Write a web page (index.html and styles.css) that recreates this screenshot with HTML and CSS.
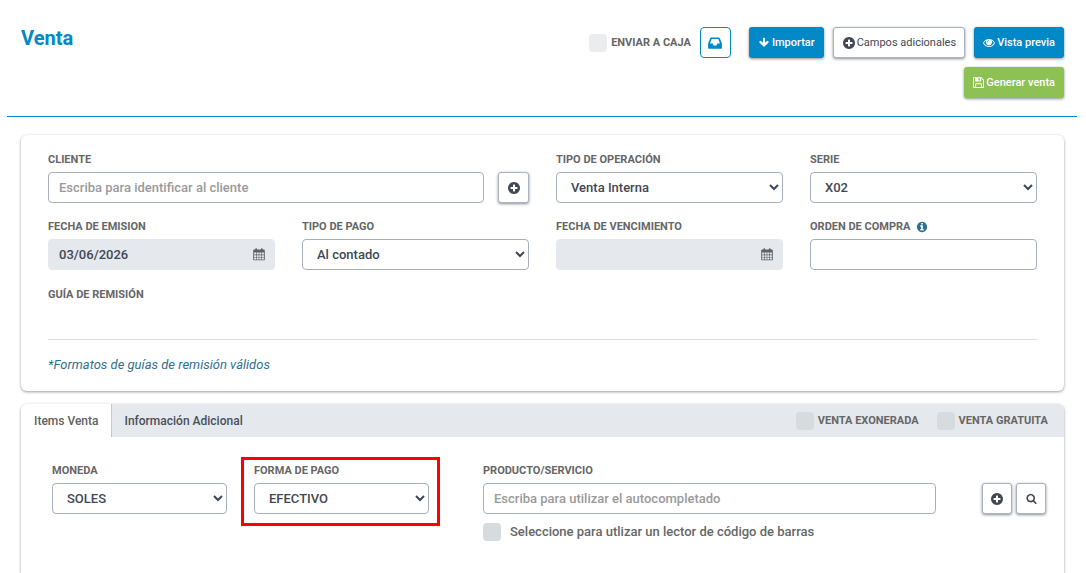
FILE: index.html
```html
<!DOCTYPE html>
<html lang="es">
<head>
<meta charset="utf-8">
<title>Venta</title>
<link rel="stylesheet" href="styles.css">
</head>
<body>
<svg class="sprite" aria-hidden="true">
  <symbol id="plus" viewBox="0 0 1792 1792"><path d="M1344 960v-128q0-26-19-45t-45-19h-256v-256q0-26-19-45t-45-19h-128q-26 0-45 19t-19 45v256h-256q-26 0-45 19t-19 45v128q0 26 19 45t45 19h256v256q0 26 19 45t45 19h128q26 0 45-19t19-45v-256h256q26 0 45-19t19-45zm320-64q0 209-103 385.5t-279.5 279.5-385.5 103-385.5-103-279.5-279.5-103-385.5 103-385.5 279.5-279.5 385.5-103 385.5 103 279.5 279.5 103 385.5z"/></symbol>
  <symbol id="info" viewBox="0 0 1792 1792"><path d="M1152 1376v-160q0-14-9-23t-23-9h-96v-512q0-14-9-23t-23-9h-320q-14 0-23 9t-9 23v160q0 14 9 23t23 9h96v320h-96q-14 0-23 9t-9 23v160q0 14 9 23t23 9h448q14 0 23-9t9-23zm-128-896v-160q0-14-9-23t-23-9h-192q-14 0-23 9t-9 23v160q0 14 9 23t23 9h192q14 0 23-9t9-23zm640 416q0 209-103 385.5t-279.5 279.5-385.5 103-385.5-103-279.5-279.5-103-385.5 103-385.5 279.5-279.5 385.5-103 385.5 103 279.5 279.5 103 385.5z"/></symbol>
  <symbol id="search" viewBox="0 0 1792 1792"><path d="M1216 832q0-185-131.5-316.5t-316.5-131.5-316.5 131.5-131.5 316.5 131.5 316.5 316.5 131.5 316.5-131.5 131.5-316.5zm512 832q0 52-38 90t-90 38q-54 0-90-38l-343-342q-179 124-399 124-143 0-273.5-55.5t-225-150-150-225-55.5-273.5 55.5-273.5 150-225 225-150 273.5-55.5 273.5 55.5 225 150 150 225 55.5 273.5q0 220-124 399l343 343q37 37 37 90z"/></symbol>
  <symbol id="down" viewBox="0 0 14 14"><path d="M5.7 1.6q0-.8.8-.8h1q.8 0 .8.8v5.2l2.2-2.2q.6-.5 1.1 0l.7.7q.5.6 0 1.1l-4.7 4.8q-.6.5-1.2 0L1.700 6.400q-.5-.5 0-1.100l.7-.7q.5-.5 1.100 0l2.200 2.200z"/></symbol>
  <symbol id="inbox" viewBox="0 0 14 12"><path fill-rule="evenodd" d="M3.200.5h7.600q.7 0 1 .7l2.100 5.200v4.600q0 .7-.7.700H.8q-.7 0-.7-.7V6.400L2.200 1.200q.3-.7 1-.7zM3.700 2 2 6.500h2.600l.9 2h3l.9-2H12L10.300 2z"/></symbol>
  <symbol id="eye" viewBox="0 0 14 10"><path fill-rule="evenodd" d="M7 .3c3 0 5.500 1.800 7 4.700-1.500 2.900-4 4.700-7 4.700S1.500 7.900 0 5C1.500 2.100 4 .3 7 .3zM4.300 1.900C3 2.500 1.900 3.600 1.100 5 2.400 7.200 4.500 8.700 7 8.700S11.600 7.200 12.900 5c-.8-1.400-1.900-2.500-3.200-3.100A3.500 3.500 0 1 1 4.300 1.900zM7 2a2 2 0 0 0-2.100 2.100h.8A1.300 1.300 0 0 1 7 2.800z"/></symbol>
  <symbol id="save" viewBox="0 0 12 12"><path fill-rule="evenodd" d="M.9.200h7.900q.4 0 .8.400l2 2q.3.400.3.800v7.700q0 .8-.8.800H.9q-.8 0-.8-.8V1Q.1.200.9.200zM1.100 1.200v9.700h1.200V7.500q0-.7.700-.7h6q.7 0 .7.700v3.400h1.200V3.500L8.900 1.300v3q0 .7-.7.700H3q-.7 0-.7-.7V1.200zM5.900 1.300v2.600h1.600V1.300zM3.300 7.800v3.100h5.400V7.800z"/></symbol>
  <symbol id="calendar" viewBox="0 0 13 14"><path fill-rule="evenodd" d="M2.500 1.700V1Q2.500.1 3.500.1t1 .9v.7h4V1q0-.9 1-.9t1 .9v.7h1.300q1 0 1 1v9.600q0 1-1 1H1.200q-1 0-1-1V2.700q0-1 1-1zM1.200 4.900v2.200h2.200V4.900zm2.900 0v2.200h2.100V4.900zm2.700 0v2.200h2.100V4.900zm2.800 0v2.200h2.200V4.900zM1.200 7.700v2.200h2.200V7.700zm2.900 0v2.200h2.100V7.700zm2.700 0v2.200h2.100V7.700zm2.800 0v2.200h2.200V7.700zM1.200 10.500v1.900h2.200v-1.900zm2.900 0v1.900h2.100v-1.900zm2.700 0v1.900h2.100v-1.900zm2.800 0v1.900h2.200v-1.900z"/></symbol>
</svg>

<header class="topbar">
  <h1 class="title">Venta</h1>
  <div class="actions">
    <div class="actions-row">
      <label class="check caja"><input type="checkbox"><span>ENVIAR A CAJA</span></label>
      <button class="btn outline" type="button" aria-label="Caja"><svg class="icon wide"><use href="#inbox"/></svg></button>
      <button class="btn primary import" type="button"><svg class="icon"><use href="#down"/></svg>Importar</button>
      <button class="btn plain" type="button"><svg class="icon large"><use href="#plus"/></svg>Campos adicionales</button>
      <button class="btn primary" type="button"><svg class="icon"><use href="#eye"/></svg>Vista previa</button>
    </div>
    <button class="btn success" type="button"><svg class="icon small"><use href="#save"/></svg>Generar venta</button>
  </div>
</header>

<main class="content">
  <section class="card details">
    <div class="grid">
      <div class="field span2">
        <label for="cliente">CLIENTE</label>
        <div class="with-button">
          <input class="control" id="cliente" type="text" placeholder="Escriba para identificar al cliente">
          <button class="btn plain square" type="button" aria-label="Agregar cliente"><svg class="icon large"><use href="#plus"/></svg></button>
        </div>
      </div>
      <div class="field">
        <label for="operacion">TIPO DE OPERACIÓN</label>
        <select class="control" id="operacion"><option>Venta Interna</option></select>
      </div>
      <div class="field">
        <label for="serie">SERIE</label>
        <select class="control" id="serie"><option>X02</option></select>
      </div>
      <div class="field">
        <label for="emision">FECHA DE EMISION</label>
        <div class="date"><input class="control" id="emision" type="text" value="03/06/2026" readonly><svg class="icon"><use href="#calendar"/></svg></div>
      </div>
      <div class="field">
        <label for="pago">TIPO DE PAGO</label>
        <select class="control" id="pago"><option>Al contado</option></select>
      </div>
      <div class="field">
        <label for="vencimiento">FECHA DE VENCIMIENTO</label>
        <div class="date"><input class="control" id="vencimiento" type="text" readonly><svg class="icon"><use href="#calendar"/></svg></div>
      </div>
      <div class="field">
        <label for="orden">ORDEN DE COMPRA <svg class="icon info"><use href="#info"/></svg></label>
        <input class="control" id="orden" type="text">
      </div>
    </div>
    <div class="guide">
      <h2 class="caption">GUÍA DE REMISIÓN</h2>
      <a class="formats" href="#formatos">*Formatos de guías de remisión válidos</a>
    </div>
  </section>

  <section class="card items">
    <div class="tabs">
      <button class="tab active" type="button">Items Venta</button>
      <button class="tab" type="button">Información Adicional</button>
      <div class="tab-options">
        <label class="check"><input type="checkbox"><span>VENTA EXONERADA</span></label>
        <label class="check"><input type="checkbox"><span>VENTA GRATUITA</span></label>
      </div>
    </div>
    <div class="items-form">
      <div class="field short">
        <label for="moneda">MONEDA</label>
        <select class="control" id="moneda"><option>SOLES</option></select>
      </div>
      <div class="field short highlighted">
        <label for="forma">FORMA DE PAGO</label>
        <select class="control" id="forma"><option>EFECTIVO</option></select>
      </div>
      <div class="field product">
        <label for="producto">PRODUCTO/SERVICIO</label>
        <input class="control" id="producto" type="text" placeholder="Escriba para utilizar el autocompletado">
        <label class="check scanner"><input type="checkbox"><span>Seleccione para utlizar un lector de código de barras</span></label>
      </div>
      <div class="item-buttons">
        <button class="btn plain square" type="button" aria-label="Agregar producto"><svg class="icon large"><use href="#plus"/></svg></button>
        <button class="btn plain square" type="button" aria-label="Buscar producto"><svg class="icon small"><use href="#search"/></svg></button>
      </div>
    </div>
  </section>
</main>
</body>
</html>
```

FILE: styles.css
```css
* { box-sizing: border-box; }

body {
  margin: 0;
  min-height: 100vh;
  display: flex;
  flex-direction: column;
  background: #fff;
  color: #666;
  font: 500 13px/20px Roboto, "Liberation Sans", sans-serif;
}

button, input, select { font: inherit; color: inherit; }

.sprite { display: none; }

.icon { width: 12px; height: 12px; flex: none; fill: currentColor; }
.icon.large { width: 14px; height: 14px; }
.icon.wide { width: 14px; height: 14px; }
.icon.small { width: 11px; height: 11px; }

/* Header */
.topbar {
  display: flex;
  justify-content: space-between;
  margin: 0 9px 0 7px;
  padding: 27px 13px 18px 14px;
  border-bottom: 1px solid #0088c7;
}
.title { margin: 0; font-size: 20px; line-height: 22px; font-weight: 700; color: #0088c7; }
.actions { display: flex; flex-direction: column; align-items: flex-end; gap: 9px; }
.actions-row { display: flex; align-items: center; gap: 9px; }

.btn {
  display: inline-flex;
  align-items: center;
  justify-content: center;
  gap: 2px;
  height: 31px;
  padding: 0 8px;
  border: 1px solid transparent;
  border-radius: 3px;
  font-size: 11px;
  font-weight: 500;
  line-height: 16px;
  white-space: nowrap;
  box-shadow: 0 1px 3px rgba(0, 0, 0, .45);
}
.btn.primary { background: #0088c7; color: #fff; }
.btn.success { background: #8dc153; color: #fff; }
.btn.plain { gap: 1px; background: #fff; border-color: #a9b2c0; color: #404854; font-weight: 400; }
.btn.outline {
  width: 31px;
  padding: 0;
  background: #fff;
  border-color: #0088c7;
  border-radius: 4px;
  color: #0088c7;
  box-shadow: none;
}
.btn.square { width: 31px; padding: 0; flex: none; }
.btn.import { margin-left: 9px; }

/* Check boxes */
.check { display: flex; align-items: center; gap: 4px; font-size: 11px; line-height: 16px; font-weight: 700; }
.check input {
  appearance: none;
  flex: none;
  width: 18px;
  height: 18px;
  margin: 0;
  border-radius: 4px;
  background: #d6dbde;
}
.check.caja input { background: #ebecee; }

/* Cards */
.content { flex: 1; display: flex; flex-direction: column; gap: 13px; padding: 18px 22px 0 21px; }
.card { border-radius: 6px; background: #fff; box-shadow: 0 1px 3px rgba(0, 0, 0, .4); }
.details { padding: 17px 27px 15px; }

.grid { display: grid; grid-template-columns: repeat(4, minmax(0, 1fr)); gap: 16px 27px; }
.span2 { grid-column: span 2; }
.with-button { display: flex; gap: 14px; }

.field > label:first-child {
  display: flex;
  align-items: center;
  gap: 6px;
  height: 16px;
  margin-bottom: 4px;
  font-size: 11px;
  line-height: 16px;
  font-weight: 700;
}
.icon.info { color: #30708f; }

.control {
  display: block;
  width: 100%;
  height: 31px;
  padding: 0 10px;
  border: 1px solid #a5afc0;
  border-radius: 4px;
  background-color: #fff;
  color: #3f4754;
}
select.control { padding: 0 0 0 10px; }
.control::placeholder { color: #9a9a9a; opacity: 1; }
.control:read-only:not(select) { border-color: #e5e8ed; background-color: #e5e8ed; }
.control:placeholder-shown { border-color: #a5afc0; background-color: #fff; }

.date { display: grid; align-items: center; }
.date > * { grid-area: 1 / 1; }
.date .icon { justify-self: end; margin-right: 10px; height: 13px; color: #626262; }

.guide { margin-top: 17px; }
.caption {
  margin: 0 0 15px;
  padding-bottom: 36px;
  border-bottom: 1px solid #dcdfe2;
  font-size: 11px;
  line-height: 16px;
  font-weight: 700;
}
.formats { font-style: italic; font-weight: 400; color: #30708f; text-decoration: none; }
.details { padding-bottom: 16px; }

/* Items */
.items { flex: 1; border-radius: 6px 6px 0 0; }
.tabs {
  display: flex;
  height: 33px;
  border-radius: 6px 6px 0 0;
  background: #e5e8ed;
  overflow: hidden;
}
.tab {
  padding: 0 13px;
  border: 0;
  background: none;
  font-size: 12px;
  line-height: 16px;
  color: #4a4f59;
}
.tab.active { padding: 0 12px 0 13px; border-right: 1px solid #c3c9d4; background: #fff; color: #626262; }
.tab-options { display: flex; align-items: center; gap: 18px; margin-left: auto; padding-right: 16px; }

.items-form {
  display: flex;
  align-items: flex-start;
  gap: 27px;
  padding: 26px 18px 30px 31px;
}
.short { flex: none; width: 175px; }
.highlighted { position: relative; }
.highlighted::after {
  content: "";
  position: absolute;
  inset: -6px -11px -12px -13px;
  border: 3px solid #f00;
  pointer-events: none;
}
.product { flex: 1; margin-left: 27px; }
.scanner { gap: 9px; margin-top: 8px; font-size: 13px; line-height: 20px; font-weight: 500; }
.item-buttons { display: flex; gap: 4px; margin: 20px 0 0 19px; }
.item-buttons .square { width: 30px; }
```
